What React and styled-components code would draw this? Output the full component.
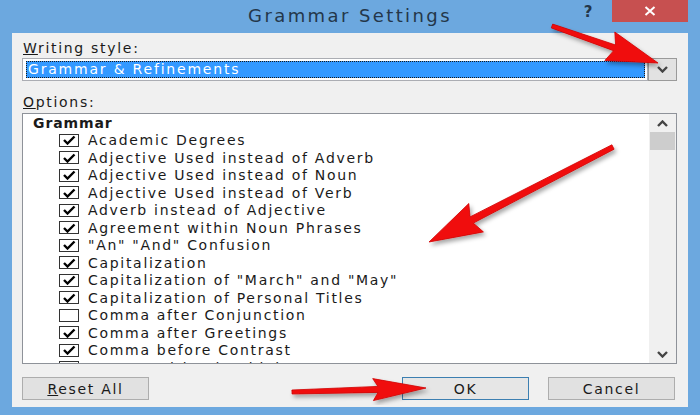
import React from 'react';
import styled, { createGlobalStyle, css } from 'styled-components';

const Global = createGlobalStyle`
  html, body { margin: 0; padding: 0; }
  body {
    width: 700px; height: 415px; overflow: hidden;
    font-family: "DejaVu Sans", "Noto Sans", sans-serif;
  }
`;

const Window = styled.div`
  position: relative;
  width: 700px;
  height: 415px;
  box-sizing: border-box;
  padding: 0 12px 8px 12px;
  background: #6ca8df;
  display: flex;
  flex-direction: column;
`;

const TitleBar = styled.div`
  height: 33px;
  display: grid;
  grid-template-columns: 1fr auto 1fr;
  align-items: start;
`;

const Title = styled.div`
  grid-column: 2;
  font-size: 18px;
  letter-spacing: 2.4px;
  line-height: 32px;
  color: #24374a;
`;

const Controls = styled.div`
  grid-column: 3;
  justify-self: end;
  display: flex;
  align-items: flex-start;
`;

const Help = styled.div`
  width: 20px;
  margin-right: 14px;
  text-align: center;
  font-weight: bold;
  font-size: 15px;
  line-height: 24px;
  color: #24374a;
`;

const CloseBtn = styled.div`
  width: 76px;
  height: 22px;
  background: #c75050;
  display: flex;
  align-items: center;
  justify-content: center;
`;

const Body = styled.div`
  flex: 1;
  background: #f0f0f0;
  padding: 7px 11px 7px 10px;
  display: flex;
  flex-direction: column;
`;

const textBase = css`
  font-size: 14px;
  letter-spacing: 1.7px;
  color: #1a1a1a;
`;

const FieldLabel = styled.div`
  ${textBase};
  line-height: 16px;
  padding-left: 1px;
  margin-top: ${(p) => p.$top || 0}px;
`;

const Combo = styled.div`
  margin-top: 2px;
  height: 23px;
  display: flex;
`;

const ComboField = styled.div`
  flex: 1;
  box-sizing: border-box;
  border: 1px solid #abadb3;
  background: #fff;
  padding: 2px 2px 2px 3px;
`;

const Selection = styled.div`
  height: 100%;
  box-sizing: border-box;
  background: #3399ff;
  outline: 1px dotted #1a1a1a;
  outline-offset: -1px;
  color: #fff;
  font-size: 14px;
  letter-spacing: 1.8px;
  line-height: 17px;
  padding-left: 2px;
`;

const ComboButton = styled.div`
  width: 29px;
  box-sizing: border-box;
  border: 1px solid #9a9a9a;
  background: #e2e2e2;
  display: flex;
  align-items: center;
  justify-content: center;
`;

const ListBox = styled.div`
  margin-top: 3px;
  height: 251px;
  box-sizing: border-box;
  border: 1px solid #8e9299;
  background: #fff;
  display: flex;
`;

const ListContent = styled.div`
  flex: 1;
  overflow: hidden;
`;

const Row = styled.div`
  height: 17.5px;
  display: flex;
  align-items: center;
  white-space: nowrap;
  ${textBase};
`;

const Header = styled(Row)`
  padding-left: 10px;
  font-weight: bold;
  letter-spacing: 0.9px;
`;

const Item = styled(Row)`
  padding-left: 36px;
  gap: 9px;
`;

const Check = styled.span`
  width: 20px;
  height: 13px;
  box-sizing: border-box;
  border: 1px solid #333;
  background: #fff;
  display: flex;
  align-items: center;
  justify-content: center;
  flex-shrink: 0;
`;

const Scrollbar = styled.div`
  width: 27px;
  background: #f0f0f0;
  display: flex;
  flex-direction: column;
`;

const ScrollArrow = styled.div`
  height: 18px;
  display: flex;
  align-items: center;
  justify-content: center;
  margin-top: ${(p) => (p.$bottom ? 'auto' : '0')};
`;

const Thumb = styled.div`
  height: 18px;
  margin: 0 1px;
  background: #cdcdcd;
`;

const ButtonRow = styled.div`
  margin-top: 13px;
  height: 23px;
  display: flex;
  padding-right: 2px;
`;

const Button = styled.div`
  width: 127px;
  box-sizing: border-box;
  border: 1px solid ${(p) => (p.$primary ? '#3c7fb1' : '#adadad')};
  background: ${(p) => (p.$primary ? '#e6e6e6' : '#e1e1e1')};
  display: flex;
  align-items: center;
  justify-content: center;
  ${textBase};
  margin-left: ${(p) => p.$ml || '0'};
`;

const Overlay = styled.svg`
  position: absolute;
  left: 0;
  top: 0;
  pointer-events: none;
`;

const Chevron = ({ up, w = 11, h = 7, stroke = 2.4, color = '#444' }) => (
  <svg width={w} height={h} viewBox="0 0 11 7">
    <polyline
      points={up ? '1,6 5.5,1.5 10,6' : '1,1 5.5,5.5 10,1'}
      fill="none"
      stroke={color}
      strokeWidth={stroke}
    />
  </svg>
);

const CheckMark = () => (
  <svg width="14" height="10" viewBox="0 0 14 10">
    <polyline points="2,5 5.5,8.5 12.5,1.5" fill="none" stroke="#000" strokeWidth="2.4" />
  </svg>
);

const items = [
  ['Academic Degrees', true],
  ['Adjective Used instead of Adverb', true],
  ['Adjective Used instead of Noun', true],
  ['Adjective Used instead of Verb', true],
  ['Adverb instead of Adjective', true],
  ['Agreement within Noun Phrases', true],
  ['"An" "And" Confusion', true],
  ['Capitalization', true],
  ['Capitalization of "March" and "May"', true],
  ['Capitalization of Personal Titles', true],
  ['Comma after Conjunction', false],
  ['Comma after Greetings', true],
  ['Comma before Contrast', true],
  ['Comma with Adverbials', true],
];

function arrowPoints(x1, y1, x2, y2, w1, w2, L, H) {
  const dx = x2 - x1;
  const dy = y2 - y1;
  const len = Math.hypot(dx, dy);
  const ux = dx / len;
  const uy = dy / len;
  const px = -uy;
  const py = ux;
  const bx = x2 - ux * L;
  const by = y2 - uy * L;
  const cx = bx - ux * 5;
  const cy = by - uy * 5;
  const pts = [
    [x1 + (px * w1) / 2, y1 + (py * w1) / 2],
    [bx + (px * w2) / 2, by + (py * w2) / 2],
    [cx + (px * H) / 2, cy + (py * H) / 2],
    [x2, y2],
    [cx - (px * H) / 2, cy - (py * H) / 2],
    [bx - (px * w2) / 2, by - (py * w2) / 2],
    [x1 - (px * w1) / 2, y1 - (py * w1) / 2],
  ];
  return pts.map((p) => p.map((v) => v.toFixed(1)).join(',')).join(' ');
}

const arrows = [
  [552, 26, 658, 63, 4, 6, 46, 30],
  [613, 147, 429, 242, 5, 7, 48, 32],
  [292, 392, 426, 388, 4, 6, 48, 22],
];

export default function App() {
  return (
    <>
      <Global />
      <Window>
        <TitleBar>
          <Title>Grammar Settings</Title>
          <Controls>
            <Help>?</Help>
            <CloseBtn>
              <svg width="12" height="10" viewBox="0 0 12 10">
                <path d="M1.5 1 L10.5 9 M10.5 1 L1.5 9" stroke="#fff" strokeWidth="2" />
              </svg>
            </CloseBtn>
          </Controls>
        </TitleBar>
        <Body>
          <FieldLabel>
            <u>W</u>riting style:
          </FieldLabel>
          <Combo>
            <ComboField>
              <Selection>Grammar &amp; Refinements</Selection>
            </ComboField>
            <ComboButton>
              <Chevron />
            </ComboButton>
          </Combo>
          <FieldLabel $top={13}>
            <u>O</u>ptions:
          </FieldLabel>
          <ListBox>
            <ListContent>
              <Header>Grammar</Header>
              {items.map(([label, checked]) => (
                <Item key={label}>
                  <Check>{checked && <CheckMark />}</Check>
                  {label}
                </Item>
              ))}
            </ListContent>
            <Scrollbar>
              <ScrollArrow>
                <Chevron up />
              </ScrollArrow>
              <Thumb />
              <ScrollArrow $bottom>
                <Chevron />
              </ScrollArrow>
            </Scrollbar>
          </ListBox>
          <ButtonRow>
            <Button>
              <span>
                <u>R</u>eset All
              </span>
            </Button>
            <Button $primary $ml="auto">OK</Button>
            <Button $ml="19px">Cancel</Button>
          </ButtonRow>
        </Body>
        <Overlay width="700" height="415" viewBox="0 0 700 415">
          <defs>
            <filter id="shadow" x="-20%" y="-20%" width="140%" height="140%">
              <feDropShadow dx="2" dy="3" stdDeviation="2" floodColor="#000" floodOpacity="0.35" />
            </filter>
          </defs>
          {arrows.map((a, i) => (
            <polygon key={i} points={arrowPoints(...a)} fill="#f01010" stroke="#d00000" strokeWidth="0.8" filter="url(#shadow)" />
          ))}
        </Overlay>
      </Window>
    </>
  );
}
